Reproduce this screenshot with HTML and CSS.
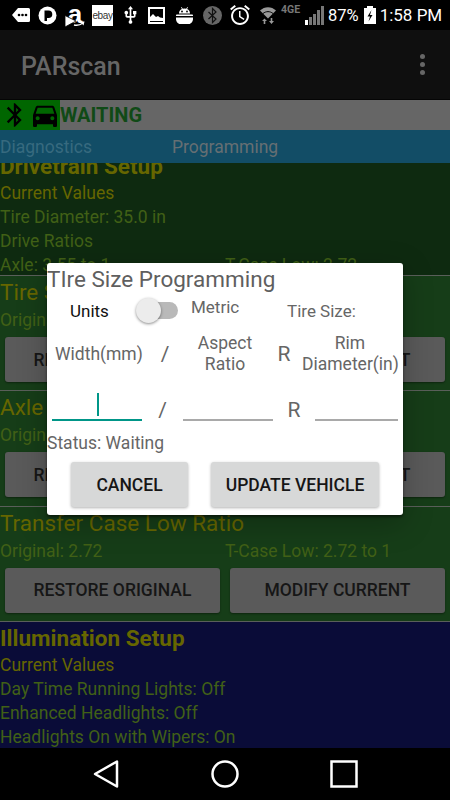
FILE: index.html
```html
<!DOCTYPE html>
<html lang="en">
<head>
<meta charset="utf-8">
<title>PARscan</title>
<link rel="stylesheet" href="styles.css">
</head>
<body>
<div class="phone">
  <header class="statusbar">
    <svg class="ic ic-msg" width="18" height="14" viewBox="0 0 18 14"><path fill="#fff" d="M6 0h10.5A1.5 1.5 0 0 1 18 1.5v11a1.5 1.5 0 0 1-1.5 1.5H6L0 7z"/><circle cx="7" cy="7" r="1.3"/><circle cx="10.5" cy="7" r="1.3"/><circle cx="14" cy="7" r="1.3"/></svg>
    <svg class="ic ic-p" width="19" height="19" viewBox="0 0 19 19"><circle cx="9.5" cy="9.5" r="9" fill="#fff"/><path d="M6.5 15V4.5h4a3.8 3.8 0 0 1 0 7.6H9V15z"/></svg>
    <div class="amz"><span class="amz-a">a</span><svg class="amz-mark" width="20" height="23" viewBox="0 0 20 23"><path fill="#fff" stroke="#000" stroke-width=".8" d="M0 11.500l11 5.500-11 6z"/><path fill="none" stroke="#fff" stroke-width="1.500" d="M9 21c3 .8 6 .2 9-2"/><path fill="#fff" d="M15 17.500l4.500 0-1 4z"/></svg></div>
    <div class="ebay"><span>ebay</span></div>
    <svg class="ic ic-usb" width="15" height="18" viewBox="3.500 1 17 21.500"><path fill="#fff" d="M15 7v4h1v2h-3V5h2l-3-4-3 4h2v8H8v-2.070c.7-.37 1.200-1.080 1.200-1.930 0-1.210-.99-2.200-2.200-2.200-1.210 0-2.200.99-2.200 2.200 0 .85.5 1.560 1.200 1.930V13c0 1.110.89 2 2 2h3v3.050c-.71.37-1.200 1.100-1.200 1.950 0 1.220.99 2.200 2.200 2.200 1.210 0 2.200-.98 2.200-2.200 0-.85-.49-1.580-1.200-1.950V15h3c1.110 0 2-.89 2-2v-2h1V7h-4z"/></svg>
    <svg class="ic ic-img" width="17" height="17" viewBox="0 0 17 17"><rect x="1" y="1" width="15" height="15" fill="none" stroke="#fff" stroke-width="2"/><path fill="#fff" d="M2 14V10l3-3 3 3 2-1 2 1.500 3 .5v3z"/></svg>
    <svg class="ic ic-droid" width="17" height="17" viewBox="0 0 17 17"><path fill="#fff" d="M3 6.500C3 4 4.500 2.500 6 2L5 .5l.6-.4L6.800 1.700a5 5 0 0 1 3.400 0L11.400.1l.6.4L11 2c1.500.5 3 2 3 4.500zM0 8.500C0 8 .4 7.500 1 7.500h15c.6 0 1 .5 1 1V9H0zM0 10.500h17v1.500c0 2.500-2 5-4 5H4c-2 0-4-2.500-4-5z"/><circle cx="6" cy="4.500" r=".9"/><circle cx="11" cy="4.500" r=".9"/></svg>
    <svg class="ic ic-btc" width="19" height="19" viewBox="0 0 19 19"><circle cx="9.500" cy="9.500" r="9.500" fill="#666"/><path fill="none" stroke="#111" stroke-width="1.200" d="M5.500 6l7.500 7-3.500 3.500V2.500L13 6l-7.500 7"/></svg>
    <svg class="ic ic-alarm" width="20" height="20" viewBox="2 1.860 20 20.140"><path fill="#fff" d="M22 5.720l-4.600-3.860-1.290 1.530 4.600 3.860L22 5.720zM7.880 3.390L6.600 1.860 2 5.710l1.290 1.530 4.590-3.850zM12.500 8H11v6l4.750 2.850.75-1.230-4-2.370V8zM12 4c-4.970 0-9 4.030-9 9s4.030 9 9 9 9-4.030 9-9-4.030-9-9-9zm0 16c-3.870 0-7-3.130-7-7s3.130-7 7-7 7 3.130 7 7-3.130 7-7 7z"/></svg>
    <svg class="ic ic-wifi" width="16" height="17" viewBox="0 0 16 17"><path fill="#999" d="M0 3.500C4.500-1 11.500-1 16 3.500L8 11.500z"/><path fill="none" stroke="#000" stroke-width="1" d="M3 6.500c3-2.500 7-2.500 10 0"/><path fill="#999" d="M4.500 11.500l-2.500 2.500h1.700V17h1.600v-3H7zM11.500 17L14 14h-1.700v-3h-1.600v3H9z"/></svg>
    <span class="net">4GE</span>
    <svg class="ic ic-sig" width="19" height="19" viewBox="0 0 19 19"><rect x="0" y="14" width="3" height="5" fill="#fff"/><rect x="4" y="11" width="3" height="8" fill="#777"/><rect x="8" y="8" width="3" height="11" fill="#777"/><rect x="12" y="4" width="3" height="15" fill="#777"/><rect x="16" y="0" width="3" height="19" fill="#777"/></svg>
    <span class="pct">87%</span>
    <svg class="ic ic-bat" width="12" height="18" viewBox="0 0 12 18"><path fill="#fff" d="M3 0h6v2h3v16H0V2h3z"/><path d="M7.500 4L3.500 10.500h2.500L4.500 15.500l4-6.500H6z"/></svg>
    <span class="clock">1:58 PM</span>
  </header>

  <main class="app">
    <div class="appbar">
      <span class="appname">PARscan</span>
      <div class="overflow"><i></i><i></i><i></i></div>
    </div>
    <div class="connrow">
      <div class="chip">
        <svg class="chip-bt" width="28" height="28" viewBox="0 0 24 24"><path fill="#000" d="M17.710 7.710L12 2h-1v7.590L6.410 5 5 6.410 10.590 12 5 17.590 6.410 19 11 14.410V22h1l5.710-5.710-4.300-4.290 4.300-4.290zM13 5.830l1.880 1.880L13 9.590V5.830zm1.880 10.460L13 18.170v-3.760l1.880 1.880z"/></svg>
        <svg class="chip-car" width="32" height="32" viewBox="0 0 24 24"><path fill="#000" d="M18.920 6.010C18.720 5.420 18.160 5 17.500 5h-11c-.66 0-1.210.42-1.420 1.010L3 12v8c0 .55.45 1 1 1h1c.55 0 1-.45 1-1v-1h12v1c0 .55.45 1 1 1h1c.55 0 1-.45 1-1v-8l-2.080-5.990zM6.500 16c-.83 0-1.500-.67-1.500-1.500S5.670 13 6.500 13s1.500.67 1.500 1.500S7.330 16 6.500 16zm11 0c-.83 0-1.500-.67-1.500-1.500s.67-1.500 1.500-1.500 1.500.67 1.500 1.500-.67 1.500-1.500 1.500zM5 11l1.500-4.500h11L19 11H5z"/></svg>
      </div>
      <span class="conn-text">WAITING</span>
    </div>
    <nav class="tabs">
      <span class="tab tab-diag">Diagnostics</span>
      <span class="tab tab-prog">Programming</span>
    </nav>
    <div class="content">
      <div class="scroller">
        <section class="sec-top">
          <h2 class="h-bold">Drivetrain Setup</h2>
          <p class="olive">Current Values</p>
          <p>Tire Diameter: 35.0 in</p>
          <p>Drive Ratios</p>
          <div class="pair"><p>Axle: 3.55 to 1</p><p>T-Case Low: 2.72</p></div>
        </section>
        <section class="sec">
          <h2>Tire Size</h2>
          <div class="pair"><p>Original: 35.0</p><p>Tire Size: 35.0 in</p></div>
          <div class="btns"><button>RESTORE ORIGINAL</button><button>MODIFY CURRENT</button></div>
        </section>
        <section class="sec">
          <h2>Axle Ratio</h2>
          <div class="pair"><p>Original: 3.55</p><p>Axle: 3.55 to 1</p></div>
          <div class="btns"><button>RESTORE ORIGINAL</button><button>MODIFY CURRENT</button></div>
        </section>
        <section class="sec">
          <h2>Transfer Case Low Ratio</h2>
          <div class="pair"><p>Original: 2.72</p><p>T-Case Low: 2.72 to 1</p></div>
          <div class="btns"><button>RESTORE ORIGINAL</button><button>MODIFY CURRENT</button></div>
        </section>
        <section class="sec-blue">
          <h2 class="h-bold">Illumination Setup</h2>
          <p class="olive">Current Values</p>
          <p>Day Time Running Lights: Off</p>
          <p>Enhanced Headlights: Off</p>
          <p>Headlights On with Wipers: On</p>
        </section>
      </div>
    </div>

    <div class="overlay">
      <div class="dialog">
        <div class="d-title">TIre Size Programming</div>
        <div class="d-units">
          <span class="units">Units</span>
          <span class="switch"><span class="thumb"></span></span>
          <span class="metric">Metric</span>
          <span class="tiresize">Tire Size:</span>
        </div>
        <div class="d-labels">
          <span>Width(mm)</span>
          <span class="sym">/</span>
          <span>Aspect Ratio</span>
          <span class="sym sym-r">R</span>
          <span>Rim Diameter(in)</span>
        </div>
        <div class="d-inputs">
          <span class="field active"><span class="caret"></span></span>
          <span class="sym">/</span>
          <span class="field"></span>
          <span class="sym">R</span>
          <span class="field"></span>
        </div>
        <div class="d-status">Status: Waiting</div>
        <div class="d-actions">
          <button class="d-cancel">CANCEL</button>
          <button class="d-update">UPDATE VEHICLE</button>
        </div>
      </div>
    </div>
  </main>

  <footer class="navbar">
    <svg width="28" height="30" viewBox="0 0 28 30"><path fill="none" stroke="#fff" stroke-width="2.500" stroke-linejoin="round" d="M25 2.500V27.500L3 15z"/></svg>
    <svg width="28" height="28" viewBox="0 0 28 28"><circle cx="14" cy="14" r="12.500" fill="none" stroke="#fff" stroke-width="2.500"/></svg>
    <svg width="28" height="28" viewBox="0 0 28 28"><rect x="1.500" y="1.500" width="25" height="25" fill="none" stroke="#fff" stroke-width="2.500"/></svg>
  </footer>
</div>
</body>
</html>
```
FILE: styles.css
```css
* { box-sizing: border-box; }
html, body { margin: 0; padding: 0; }
body { background: #000; font-family: Roboto, "Liberation Sans", sans-serif; }
.phone { width: 450px; height: 800px; display: flex; flex-direction: column; overflow: hidden; }

.statusbar { height: 30px; flex: none; background: #000; display: flex; align-items: center; padding-left: 12px; color: #fff; }
.ic { flex: none; display: block; }
.ic-p { margin-left: 8px; }
.amz { margin-left: 8px; width: 20px; height: 23px; position: relative; flex: none; }
.amz-a { display: block; width: 20px; text-align: center; font: 700 26px/20px "Liberation Sans", sans-serif; color: #fff; }
.amz-mark { position: absolute; left: 0; top: 0; }
.ebay { margin-left: 7px; width: 21px; height: 21px; background: #fff; flex: none; display: flex; align-items: center; justify-content: center; }
.ebay span { font: 10px "Liberation Sans", sans-serif; color: #333; letter-spacing: -.4px; }
.ic-usb { margin-left: 10px; }
.ic-img { margin-left: 10px; }
.ic-droid { margin-left: 11px; }
.ic-btc { margin-left: 10px; }
.ic-alarm { margin-left: 8px; }
.ic-wifi { margin-left: 10px; }
.net { margin-left: 5px; width: 20px; margin-top: -12px; font: 700 10.500px/9px Roboto, sans-serif; color: #777; white-space: nowrap; flex: none; }
.ic-sig { margin-left: 4px; }
.pct { margin-left: 4px; font-size: 16.500px; flex: none; }
.ic-bat { margin-left: 5px; }
.clock { margin-left: 4px; font-size: 17px; white-space: nowrap; flex: none; }

.app { flex: 1; min-height: 0; position: relative; display: flex; flex-direction: column; }
.appbar { height: 70px; flex: none; background: #0f0f0f; border-bottom: 1px solid #050505; display: flex; align-items: center; justify-content: space-between; padding: 4px 25px 0 21px; }
.appname { font-size: 25px; font-weight: 500; color: #666; }
.overflow { display: flex; flex-direction: column; gap: 2.500px; margin-top: -4px; }
.overflow i { width: 5.500px; height: 5.500px; border-radius: 50%; background: #666; display: block; }

.connrow { height: 30px; flex: none; background: #666; display: flex; align-items: center; }
.chip { width: 60px; height: 30px; background: #006600; display: flex; align-items: center; padding-left: 1px; flex: none; }
.chip-bt { flex: none; }
.chip-car { flex: none; margin-left: 0; }
.conn-text { font-size: 20px; font-weight: 700; color: #104a16; }

.tabs { height: 33px; flex: none; background: #124d66; display: flex; position: relative; z-index: 1; align-items: center; font-size: 17.500px; }
.tab { display: block; }
.tab-diag { width: 172px; color: #376a7f; }
.tab-prog { color: #666f73; }

.content { flex: 1; min-height: 0; overflow: hidden; background: #0a0c38; }
.scroller { margin-top: -11px; }
h2 { margin: 0; font-size: 22.500px; font-weight: 400; line-height: 28px; color: #666600; }
h2.h-bold { font-weight: 700; }
p { margin: 0; font-size: 17.500px; line-height: 24px; color: #416016; }
p.olive { color: #666600; }
.sec-top { background: #0e2a10; height: 123px; }
.sec-top h2 { margin-bottom: 1px; }
.sec { background: #163d18; height: 115.300px; border-top: 1.500px solid #5a5f5a; padding-top: 2px; }
.sec-blue { background: #0a0c38; border-top: 1.500px solid #5a5f5a; padding-top: 2.500px; }
.sec-blue h2 { margin-bottom: 1px; }
.pair { display: flex; margin-top: 2px; }
.sec-top .pair { margin-top: 0; }
.pair p:first-child { flex: 0 0 225px; }
.btns { display: flex; gap: 10px; padding: 5px 5px 0; }
button { border: 0; border-radius: 3px; background: #5a5a5a; height: 45px; flex: 1; padding: 0; font: 500 17.500px Roboto, sans-serif; color: #161616; box-shadow: 0 1px 2px rgba(0,0,0,.4); }

.overlay { position: absolute; inset: 0; z-index: 2; display: flex; align-items: center; justify-content: center; }
.dialog { width: 356px; height: 252px; background: #fff; border-radius: 3px; box-shadow: 0 2px 3px rgba(0,0,0,.5), 0 8px 30px rgba(0,0,0,.25); color: #666; font-size: 17.500px; padding-top: 1px; }
.d-title { font-size: 22.500px; line-height: 30px; color: #5f5f5f; white-space: nowrap; }
.d-units { height: 33px; display: flex; align-items: center; padding-left: 23px; }
.units { color: #111; width: 66px; font-size: 17px; }
.switch { position: relative; width: 42px; height: 17px; flex: none; }
.switch::before { content: ""; position: absolute; left: 10px; right: 0; top: 0; bottom: 0; border-radius: 9px; background: #b9b9b9; }
.thumb { position: absolute; left: 0; top: -4px; width: 25px; height: 25px; border-radius: 50%; background: #ececec; box-shadow: 0 1px 3px rgba(0,0,0,.45); }
.metric { margin-left: 13px; width: 96px; margin-top: -8px; font-size: 17px; }
.tiresize { font-size: 17px; white-space: nowrap; }
.d-labels { margin-top: 6px; height: 42px; display: grid; grid-template-columns: 87px 46px 74px 40px 96px; padding-left: 8px; align-items: center; text-align: center; line-height: 21px; }
.sym { font-size: 21px; text-align: center; }
.sym-r { padding-left: 4px; }
.d-inputs { margin-top: 14px; height: 32px; display: grid; grid-template-columns: 90px 41px 90px 42px 83px; padding-left: 5px; align-items: end; }
.d-inputs .sym { line-height: 22px; }
.field { display: block; height: 32px; border-bottom: 2px solid #a9a9a9; position: relative; }
.field.active { border-bottom-color: #009688; }
.caret { position: absolute; left: 45px; top: 4px; width: 2px; height: 23px; background: #009688; }
.d-status { margin-top: 10px; line-height: 24px; height: 24px; font-size: 17.500px; }
.d-actions { margin-top: 7px; display: flex; gap: 23px; padding-left: 24px; }
.d-actions button { background: #d7d8d8; flex: none; height: 45px; box-shadow: 0 1px 3px rgba(0,0,0,.3); }
.d-cancel { width: 117px; }
.d-update { width: 168px; }

.navbar { height: 52px; flex: none; background: #000; display: flex; align-items: center; justify-content: space-between; padding: 0 92px 0 92px; }
```
